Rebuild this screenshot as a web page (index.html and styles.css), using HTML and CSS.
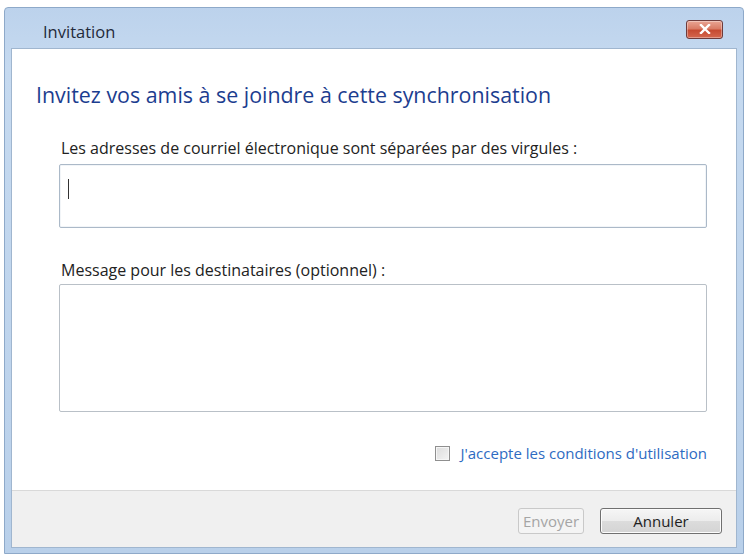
FILE: index.html
```html
<!DOCTYPE html>
<html lang="fr">
<head>
<meta charset="utf-8">
<title>Invitation</title>
<link rel="stylesheet" href="styles.css">
</head>
<body>
<div class="window">
  <div class="titlebar">
    <span class="title">Invitation</span>
    <button class="close" aria-label="Fermer">
      <svg width="12" height="10" viewBox="0 0 12 10"><path d="M2 1 L10 9 M10 1 L2 9" stroke="#fff" stroke-width="2.4" stroke-linecap="square"/></svg>
    </button>
  </div>
  <div class="client">
    <div class="content">
      <h1 class="heading">Invitez vos amis à se joindre à cette synchronisation</h1>
      <div class="form">
        <label class="label">Les adresses de courriel électronique sont séparées par des virgules :</label>
        <div class="input"><span class="caret"></span></div>
        <label class="label label-msg">Message pour les destinataires (optionnel) :</label>
        <div class="textarea"></div>
        <div class="terms">
          <span class="checkbox"></span>
          <span class="terms-link">J'accepte les conditions d'utilisation</span>
        </div>
      </div>
    </div>
    <div class="footer">
      <button class="btn btn-disabled">Envoyer</button>
      <button class="btn btn-default">Annuler</button>
    </div>
  </div>
</div>
</body>
</html>
```

FILE: styles.css
```css
html, body {
  margin: 0;
  padding: 0;
  background: #ffffff;
}
body {
  font-family: "Open Sans", "Noto Sans", sans-serif;
  color: #1e1e1e;
}
.window {
  margin: 7px 0 0 4px;
  width: 740px;
  height: 547px;
  box-sizing: border-box;
  background: linear-gradient(to bottom, #bcd2ec 0%, #c6daf0 60px, #b9d0ea 100%);
  border: 1px solid #8ea9c9;
  border-radius: 4px 4px 0 0;
  padding: 0 6px 5px 6px;
  display: flex;
  flex-direction: column;
}
.titlebar {
  height: 40px;
  flex: none;
  display: flex;
  align-items: center;
  justify-content: space-between;
  padding: 0 14px 0 32px;
}
.title {
  font-size: 16.5px;
  color: #1f2a3a;
  margin-top: 6px;
}
.close {
  width: 37px;
  height: 19px;
  margin-top: 2px;
  border: 1px solid #6e3b3b;
  border-radius: 3px;
  background: linear-gradient(to bottom, #e9a594 0%, #d97c66 45%, #c64a31 55%, #d5674e 100%);
  display: flex;
  align-items: center;
  justify-content: center;
  padding: 0;
  box-shadow: inset 0 0 0 1px rgba(255,255,255,0.35);
}
.client {
  flex: 1;
  display: flex;
  flex-direction: column;
  background: #ffffff;
  border: 1px solid #a0b6cf;
}
.content {
  flex: 1;
  padding: 0 29px 0 24px;
}
.heading {
  margin: 32px 0 0 0;
  font-size: 21.4px;
  font-weight: normal;
  color: #1c3d8f;
  line-height: 28px;
}
.form {
  padding-left: 23px;
  display: flex;
  flex-direction: column;
}
.label {
  display: block;
  font-size: 16px;
  line-height: 20px;
  color: #222;
  margin: 29px 0 0 2px;
}
.label-msg {
  margin-top: 32px;
}
.input {
  margin-top: 6px;
  height: 64px;
  border: 1px solid #abb9c8;
  border-radius: 2px;
  box-shadow: inset 0 0 0 1px #f2f5f8;
  padding: 14px 0 0 8px;
  box-sizing: border-box;
}
.caret {
  display: block;
  width: 1px;
  height: 20px;
  background: #333;
}
.textarea {
  margin-top: 4px;
  height: 128px;
  border: 1px solid #b9c0c7;
  border-radius: 2px;
  box-sizing: border-box;
}
.terms {
  margin-top: 31px;
  height: 20px;
  display: flex;
  align-items: center;
  justify-content: flex-end;
  gap: 10px;
}
.checkbox {
  width: 13px;
  height: 13px;
  border: 1px solid #8f8f8f;
  background: linear-gradient(135deg, #dcdcdc, #f4f4f4);
  box-shadow: inset 0 0 0 1px #f6f6f6;
}
.terms-link {
  font-size: 15px;
  color: #2e6bc2;
}
.footer {
  height: 57px;
  box-sizing: border-box;
  flex: none;
  background: #f0f0f0;
  border-top: 1px solid #d9d9d9;
  display: flex;
  align-items: flex-start;
  justify-content: flex-end;
  gap: 16px;
  padding: 17px 14px 0 0;
}
.btn {
  height: 26px;
  font-family: "Open Sans", "Noto Sans", sans-serif;
  font-size: 15px;
  border-radius: 3px;
  padding: 0;
}
.btn-disabled {
  width: 66px;
  color: #a5a5a5;
  border: 1px solid #c9c9c9;
  background: #f4f4f4;
}
.btn-default {
  width: 122px;
  color: #1e1e1e;
  border: 1px solid #707070;
  background: linear-gradient(to bottom, #f6f6f6 0%, #ececec 50%, #dcdcdc 51%, #d4d4d4 100%);
  box-shadow: inset 0 0 0 1px #fcfcfc;
}
```
